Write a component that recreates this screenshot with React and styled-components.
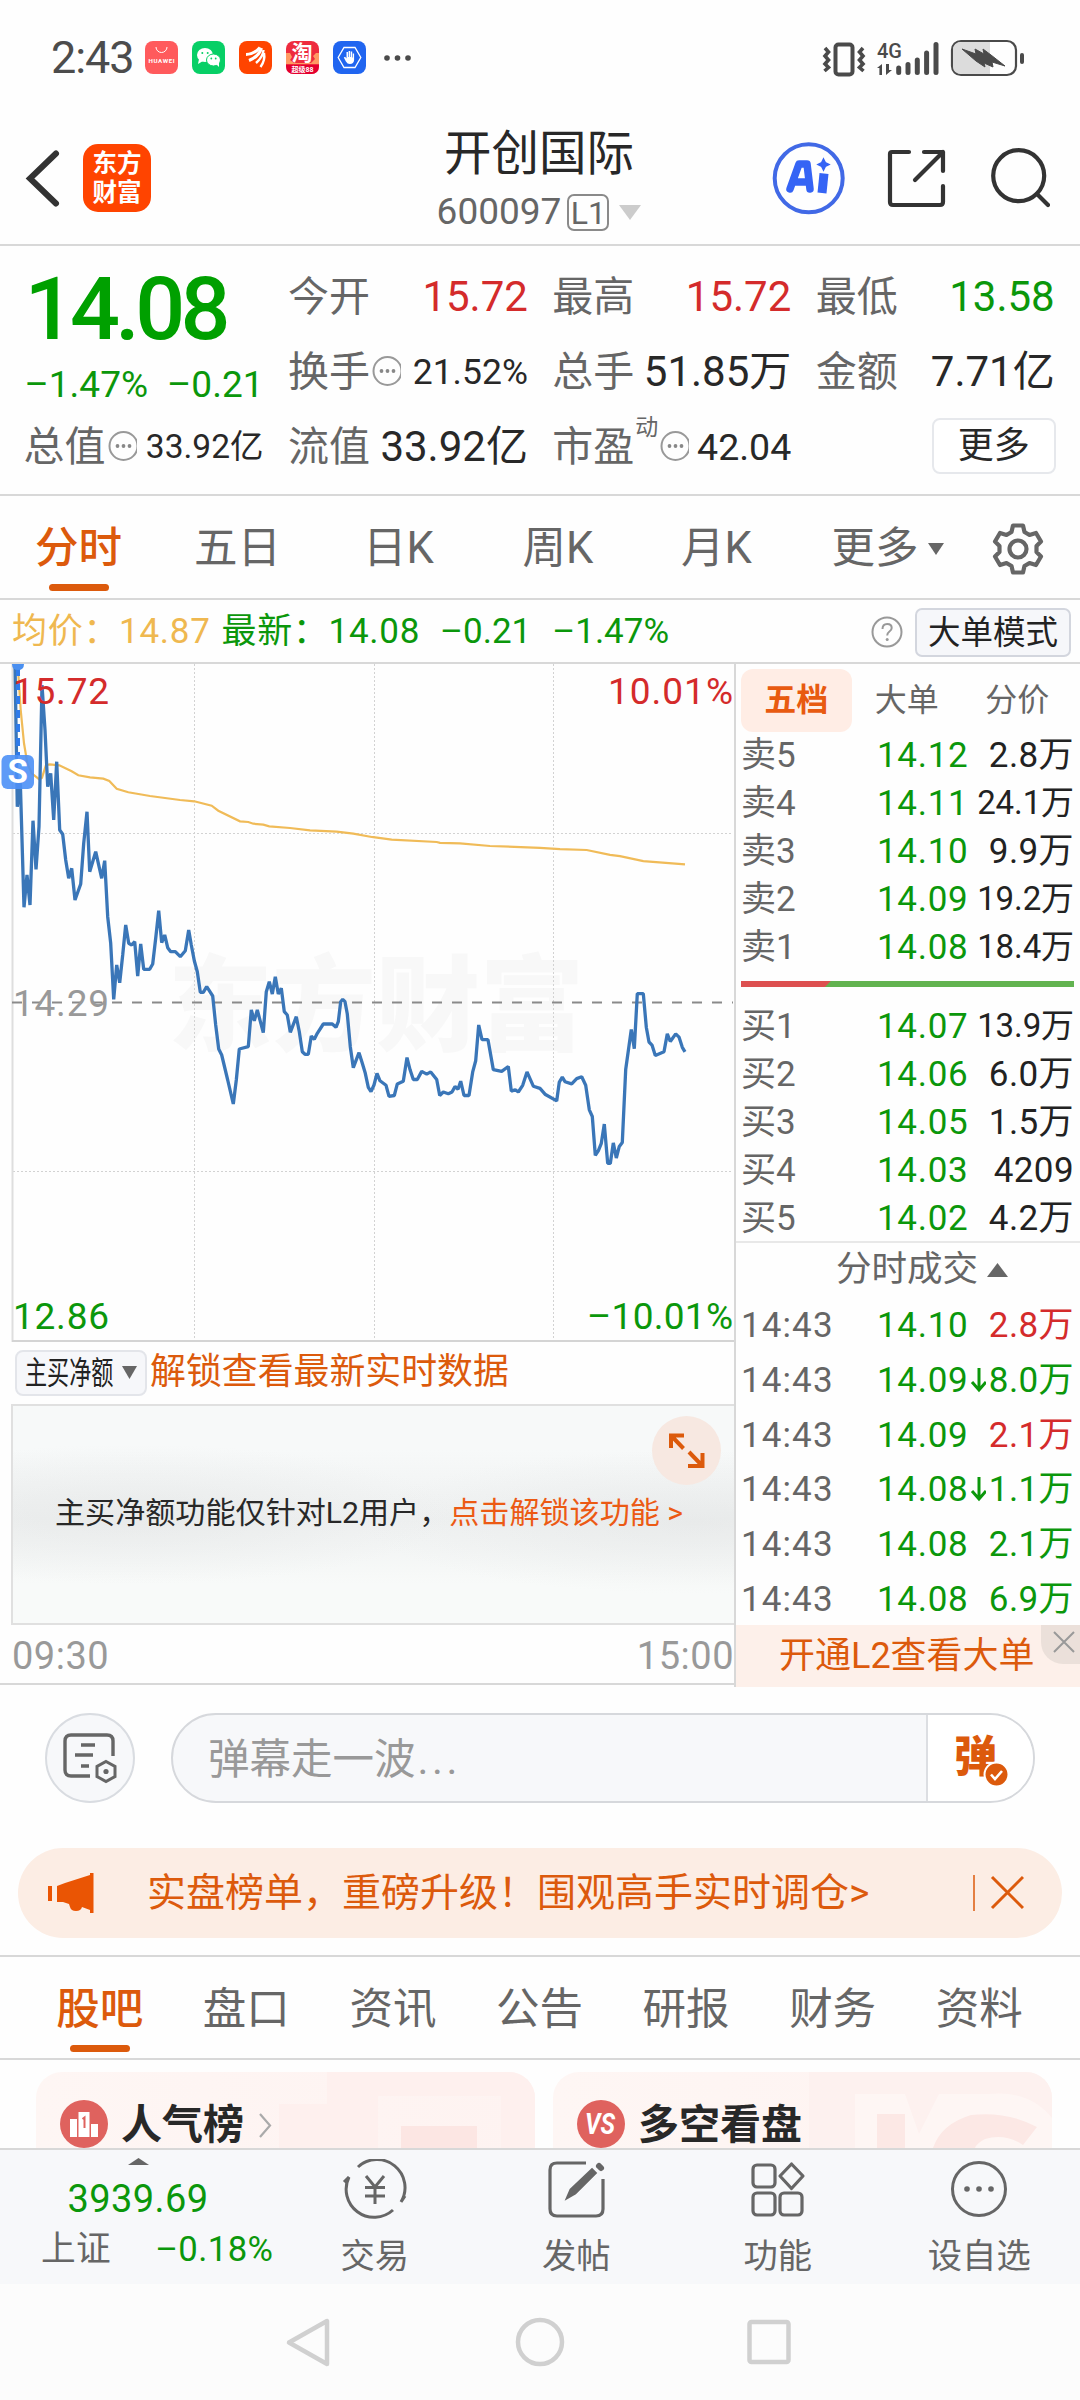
import React from 'react';
import styled, { createGlobalStyle, css } from 'styled-components';

const color = {
  green: '#0b970b',
  red: '#d42b2b',
  orange: '#dc5a0c',
  grey: '#666',
  dark: '#282828',
  line: '#d8d8d8',
};

const GlobalStyle = createGlobalStyle`
  * {
    box-sizing: border-box;
  }
  body {
    margin: 0;
    background: #fefefe;
    font-family: Roboto, "Noto Sans CJK SC", sans-serif;
    line-height: 1.1;
    color: ${color.dark};
  }
  svg {
    display: block;
    flex: none;
  }
`

const Screen = styled.div`
  width: 1080px;
  height: 2400px;
  overflow: hidden;
  display: flex;
  flex-direction: column;
  white-space: nowrap;
`

/* ---------- status bar ---------- */

const StatusBar = styled.div`
  height: 115px;
  padding: 0 56px 0 51px;
  display: flex;
  align-items: center;
  justify-content: space-between;
`
const StatusGroup = styled.div`
  display: flex;
  align-items: center;
  height: 40px;
`
const Clock = styled.span`
  width: 94px;
  font-size: 45px;
  line-height: 42px;
  letter-spacing: -1.1px;
  color: #4c4c4c;
`
const AppIcons = styled.div`
  display: flex;
  gap: 14px;
  margin-right: 17px;
`

const StatusIcons = () => (
  <AppIcons>
    <svg width="33" height="33" viewBox="0 0 33 33">
      <rect width="33" height="33" rx="8" fill="#ff5a5c" />
      <path d="M11 6a5.5 5.5 0 0 0 11 0" fill="none" stroke="#fff" strokeWidth="1" />
      <text x="16.5" y="21.5" fontSize="6.2" fontWeight="700" textAnchor="middle" textLength="26" fill="#fff">HUAWEI</text>
    </svg>
    <svg width="33" height="33" viewBox="0 0 33 33">
      <rect width="33" height="33" rx="8" fill="#07cf66" />
      <ellipse cx="13" cy="14" rx="8" ry="7" fill="#fff" />
      <path d="M7 18l-1 5 5-3z" fill="#fff" />
      <ellipse cx="21.5" cy="19" rx="7" ry="6" fill="#fff" stroke="#07cf66" strokeWidth="1" />
      <path d="M24 23l3 3 0-5z" fill="#fff" />
      <circle cx="10.3" cy="12" r="1" fill="#07cf66" />
      <circle cx="15.7" cy="12" r="1" fill="#07cf66" />
      <circle cx="19.3" cy="17.5" r="0.9" fill="#07cf66" />
      <circle cx="23.7" cy="17.5" r="0.9" fill="#07cf66" />
    </svg>
    <svg width="33" height="33" viewBox="0 0 33 33">
      <rect width="33" height="33" rx="8" fill="#ff4400" />
      <g fill="none" stroke="#fff" strokeWidth="3">
        <path d="M7 13.500q8 0 14-7" />
        <path d="M10 19.500q10-4 12.500-12.500" />
        <path d="M17 22q7-6 7.500-13" strokeWidth="2.400" />
        <path d="M21.500 26q5-7 3.500-14" strokeWidth="2.400" />
      </g>
    </svg>
    <svg width="33" height="33" viewBox="0 0 33 33">
      <rect width="33" height="33" rx="8" fill="#ee2b3e" />
      <path d="M0 12h4l2 4-2 3 4 3h17l4-4-2-3 3-3h3v11H0z" fill="#ff9a62" />
      <path d="M0 24h33v1q0 8-8 8H8q-8 0-8-8z" fill="#e4002e" />
      <text x="16" y="19" fontSize="21" fontWeight="700" textAnchor="middle" fill="#fff">淘</text>
      <text x="16.5" y="31" fontSize="7" fontWeight="700" textAnchor="middle" fill="#fff">超级88</text>
    </svg>
    <svg width="33" height="33" viewBox="0 0 33 33">
      <rect width="33" height="33" rx="8" fill="#2065f0" />
      <path d="M11 6.5h11l5.8 10L22 26.500H11l-5.800-10z" fill="none" stroke="#fff" strokeWidth="1.3" />
      <path d="M13.500 11h1.500v5h.6v-6h1.500v6h.6v-5.500h1.500v6h.6v-4h1.300v6.500q-.3 4-4.200 4-2.600 0-4-2.600l-2.100-4 1.300-.6 1.400 1.700z" fill="#fff" />
    </svg>
  </AppIcons>
)

const SystemIcons = () => (
  <svg width="204" height="40" viewBox="820 36 204 40">
    <g fill="none" stroke="#4a4a4a">
      <rect x="835.500" y="42.500" width="17" height="30" rx="3" strokeWidth="4" />
      <path d="M825 46l3.500 4-3.500 4 3.500 4-3.500 4 3.500 3.500-4 3.500M863 46l-3.500 4 3.500 4-3.500 4 3.500 4-3.500 3.500 4 3.500" strokeWidth="3.600" />
      <rect x="952" y="39" width="64" height="34" rx="9" strokeWidth="2.200" />
    </g>
    <path d="M990 40v32h-28q-9 0-9-8V48q0-8 9-8z" fill="#dcdcdc" />
    <path d="M962 47l14 5-1-5 9 5-1-5 8 6 14 11-13-4 1 5-9-4 1 4-9-6z" fill="#4a4a4a" stroke="#4a4a4a" strokeLinejoin="round" />
    <rect x="1020" y="51" width="4" height="11" rx="2" fill="#4a4a4a" />
    <text x="877" y="55.500" fontSize="21" fontWeight="500" textLength="25" lengthAdjust="spacingAndGlyphs" fill="#4a4a4a">4G</text>
    <path d="M877 66l5-4v11h-2.600v-7zM886 62v11l6-5h-3v-6z" fill="#4a4a4a" />
    <g stroke="#4a4a4a" strokeWidth="5" strokeLinecap="round">
      <path d="M898.700 66v4.500M908 62.500v8M917.300 58v12.500M926.600 51v19.500M936 42.500v28" />
    </g>
  </svg>
)

/* ---------- title bar ---------- */

const Header = styled.header`
  height: 131px;
  padding: 0 30px 0 24px;
  border-bottom: 2px solid ${color.line};
  display: grid;
  grid-template-columns: 59px 250px 1fr 308px;
  align-items: center;
`
const Logo = styled.div`
  width: 68px;
  height: 68px;
  margin-top: -4px;
  border-radius: 15px;
  background: #ff4400;
  color: #fff;
  font-size: 24.5px;
  font-weight: 700;
  line-height: 29px;
  padding: 5px 0 0 9.500px;
  white-space: normal;
`
const TitleBlock = styled.div`
  display: flex;
  flex-direction: column;
  align-items: center;
  margin: 3px 0 0 3px;
`
const StockName = styled.h1`
  margin: 0;
  font-size: 47.500px;
  font-weight: 400;
  line-height: 62px;
`
const StockCode = styled.div`
  display: flex;
  align-items: center;
  height: 54px;
  font-size: 37px;
  color: ${color.grey};
`
const Level = styled.span`
  width: 42px;
  height: 37px;
  margin: 1px 10px 0 6px;
  border: 2px solid #8a8a8a;
  border-radius: 7px;
  font-size: 32px;
  line-height: 34px;
  text-align: center;
`
const HeaderActions = styled.div`
  display: flex;
  align-items: center;
  justify-content: flex-end;
  margin-top: -4px;
`

/* ---------- quote summary ---------- */

const Quote = styled.section`
  height: 250px;
  border-bottom: 2px solid ${color.line};
  padding: 14px 25px 0 24.500px;
  display: grid;
  grid-template-columns: 239px 239px 238px 238px;
  grid-template-rows: 75px 75px 75px;
  column-gap: 25.400px;
`
const Price = styled.div`
  grid-row: span 2;
  color: #00a000;
  display: flex;
  flex-direction: column;
`
const LastPrice = styled.strong`
  font-size: 88px;
  font-weight: 500;
  line-height: 98px;
  letter-spacing: -4.600px;
`
const Change = styled.div`
  display: flex;
  justify-content: space-between;
  font-size: 37px;
  line-height: 54px;
  color: ${color.green};
`
const Cell = styled.div`
  display: flex;
  align-items: center;
  font-size: ${props => props.$small || 42}px;
  color: ${props => color[props.$tone] || color.dark};
  height: 75px;
`
const CellLabel = styled.span`
  font-size: 41px;
  margin: 1px 0 0 -1px;
  color: ${color.grey};
`
const CellValue = styled.span`
  margin-left: auto;
`
const Superscript = styled.sup`
  font-size: 23px;
  line-height: 24px;
  align-self: flex-start;
  margin: 6px 0 0 1px;
  color: ${color.grey};
`
const MoreButton = styled.button`
  justify-self: end;
  align-self: center;
  width: 124px;
  height: 56px;
  padding: 0;
  margin: -4px -1px 0 0;
  border: 2px solid #e6e8ec;
  border-radius: 8px;
  background: #fff;
  font: 36px/50px Roboto, "Noto Sans CJK SC", sans-serif;
  color: ${color.dark};
`

const Hint = () => (
  <svg width="31" height="34" viewBox="0 0 31 34">
    <circle cx="17.500" cy="15" r="14" fill="none" stroke="#999" strokeWidth="2" />
    <g fill="#888">
      <circle cx="11.500" cy="15" r="1.900" />
      <circle cx="17.500" cy="15" r="1.900" />
      <circle cx="23.500" cy="15" r="1.900" />
    </g>
  </svg>
)

/* ---------- tabs ---------- */

const PeriodTabs = styled.nav`
  height: 104px;
  border-bottom: 2px solid ${color.line};
  display: grid;
  grid-template-columns: 158px 160px 162px 157px 160px 182px 78px;
`
const SectionTabs = styled.nav`
  height: 105px;
  border: solid ${color.line};
  border-width: 2px 0;
  padding: 0 27px;
  display: grid;
  grid-template-columns: repeat(7, 1fr);
`
const Tab = styled.a`
  display: flex;
  align-items: center;
  justify-content: center;
  gap: 9px;
  height: 105px;
  padding-right: 1px;
  font-size: 43.500px;
  color: ${color.grey};
  ${props => props.$active && css`
    color: ${color.orange};
    font-weight: 500;
    flex-direction: column;
    justify-content: flex-start;
    gap: 0;
    line-height: 88px;
    padding-top: 9px;
    &::after {
      content: "";
      flex: none;
      width: 60px;
      height: 7px;
      margin-top: -9px;
      border-radius: 4px;
      background: ${color.orange};
    }
  `}
`

/* ---------- chart area ---------- */

const InfoRow = styled.div`
  height: 62px;
  padding: 2px 9px 0 12px;
  display: flex;
  align-items: center;
  font-size: 35px;
  color: ${color.green};
`
const Info = styled.span`
  margin-right: ${props => props.$gap || 0}px;
  letter-spacing: ${props => props.$tracking || 0}px;
  color: ${props => props.$color || 'inherit'};
`
const HelpIcon = styled.svg`
  margin-left: auto;
`
const ModeButton = styled.button`
  width: 156px;
  height: 49px;
  padding: 0;
  margin-left: 12px;
  border: 2px solid #d3d6de;
  border-radius: 7px;
  background: #f6f7fa;
  font: 32.500px/46px Roboto, "Noto Sans CJK SC", sans-serif;
  color: #222;
`
const Market = styled.main`
  height: 1023px;
  border-top: 2px solid ${color.line};
  border-bottom: 2px solid ${color.line};
  display: grid;
  grid-template-columns: 734px 346px;
`
const ChartColumn = styled.div`
  display: flex;
  flex-direction: column;
`
const Unlock = styled.div`
  height: 62px;
  padding: 0 0 0 15px;
  display: flex;
  align-items: center;
  font-size: 35.900px;
  color: ${color.orange};
`
const Picker = styled.div`
  width: 132px;
  height: 46px;
  margin: -1px 3px 0 0;
  padding: 0 8px 0 8px;
  border: 2px solid #e3e5ea;
  border-radius: 8px;
  background: #f6f7fa;
  display: flex;
  align-items: center;
  justify-content: space-between;
`
const PickerText = styled.span`
  width: 88px;
  font-size: 32px;
  line-height: 42px;
  color: #222;
  transform: scaleX(0.69);
  transform-origin: left;
`
const LockedPanel = styled.div`
  height: 221px;
  margin-left: 11px;
  border: solid #e0e0e0;
  border-width: 2px 0 2px 2px;
  padding: 10px 13px;
  display: flex;
  flex-direction: column;
  background:
    radial-gradient(ellipse 320px 70px at 120px 108px, rgba(222, 224, 224, 0.4), transparent),
    radial-gradient(ellipse 330px 72px at 680px 116px, rgba(222, 224, 224, 0.4), transparent),
    linear-gradient(#f7f9f9 20%, #eff1f1 52%, #f8faf9 82%);
`
const ExpandButton = styled.div`
  align-self: flex-end;
  width: 69px;
  height: 69px;
  border-radius: 50%;
  background: #f7e8e1;
`
const LockedText = styled.p`
  margin: 7px 0 0 29px;
  font-size: 30.100px;
  line-height: 42px;
  em {
    font-style: normal;
    color: #ec5a14;
  }
`
const TimeAxis = styled.div`
  flex: 1;
  padding: 2px 0 0 12px;
  display: flex;
  align-items: center;
  justify-content: space-between;
  font-size: 38px;
  letter-spacing: 0.500px;
  color: #999;
`

// [x, y] samples of the two half sessions, each on its own pixel grid
const morning = [
  [45, 38], [52, 470], [61, 395], [72, 772], [81, 675], [90, 765], [99, 512], [108, 658], [117, 530], [126, 105],
  [135, 240], [143, 410], [152, 370], [161, 510], [170, 335], [179, 540], [188, 553], [197, 630], [206, 685],
  [215, 655], [225, 750], [242, 702], [251, 580], [261, 485], [269, 665], [287, 605], [305, 685], [314, 632],
  [323, 800], [332, 880], [341, 1048], [350, 945], [359, 998], [368, 915], [377, 825], [386, 880], [395, 885],
  [404, 875], [413, 978], [422, 882], [431, 958], [449, 958], [458, 942], [467, 865], [476, 782], [485, 878],
  [494, 855], [503, 893], [512, 905], [526, 905], [541, 920], [556, 902], [566, 840], [574, 885], [583, 932],
  [592, 965], [601, 1027], [610, 1027], [620, 1010], [628, 1022], [638, 1038], [647, 1125], [656, 1197],
  [665, 1215], [683, 1290], [700, 1362], [709, 1290], [718, 1197], [745, 1190], [754, 1080], [763, 1112],
  [772, 1080], [790, 1148], [799, 1025], [808, 995], [817, 1032], [826, 980], [835, 1032], [844, 1015],
  [853, 1085], [862, 1095], [871, 1147], [889, 1100], [898, 1145], [907, 1205], [915, 1213], [925, 1213],
  [934, 1158], [943, 1168], [952, 1150], [970, 1122], [997, 1122], [1008, 1132], [1015, 1115], [1022, 1055],
  [1028, 1048], [1035, 1055], [1042, 1092], [1051, 1190], [1060, 1253], [1077, 1208], [1087, 1240],
  [1096, 1270], [1105, 1312], [1113, 1325], [1122, 1305], [1131, 1270],
]
const afternoon = [
  [18, 950], [22, 968], [30, 990], [38, 985], [51, 950], [60, 965], [78, 975], [87, 1000], [103, 998], [112, 972],
  [130, 966], [141, 913], [150, 940], [160, 962], [172, 962], [185, 944], [200, 950], [212, 945], [230, 962],
  [239, 998], [250, 990], [265, 994], [276, 990], [285, 978], [294, 984], [302, 966], [312, 998], [327, 998],
  [338, 945], [347, 920], [356, 840], [366, 873], [384, 873], [400, 940], [425, 944], [445, 933], [454, 988],
  [466, 985], [475, 990], [488, 975], [501, 945], [520, 977], [540, 982], [555, 995], [590, 1010], [598, 968],
  [607, 957], [615, 967], [635, 972], [650, 960], [665, 956], [677, 975], [688, 1030], [697, 1045], [706, 1132],
  [715, 1122], [724, 1105], [733, 1062], [743, 1150], [751, 1150], [760, 1104], [769, 1138], [778, 1112],
  [787, 1103], [797, 940], [814, 850], [823, 893], [832, 770], [850, 770], [859, 845], [867, 878], [876, 885],
  [886, 908], [912, 900], [922, 860], [931, 877], [947, 860], [957, 867], [967, 890], [975, 900],
]
const averageMorning = [
  [55, 70], [62, 180], [72, 280], [82, 340], [95, 370], [118, 388], [126, 383], [138, 345], [150, 343], [178, 346],
  [215, 364], [235, 376], [270, 382], [310, 386], [328, 393], [350, 416], [385, 427], [450, 438], [540, 450],
  [583, 454], [635, 467], [655, 482], [720, 514], [745, 516], [760, 521], [790, 524], [808, 529], [870, 534],
  [930, 541], [1010, 545], [1060, 551], [1115, 561],
]
const averageAfternoon = [
  [12, 415], [40, 419], [95, 425], [230, 430], [240, 432], [300, 433], [390, 439], [540, 443], [600, 446],
  [680, 448], [750, 459], [780, 462], [850, 473], [975, 480],
]

const plot = (first, second) => [
  ...first.map(([x, y]) => [x / 3, y / 3 - 14]),
  // skip afternoon samples that the morning line already covers
  ...second.map(([x, y]) => [360 + x / 3, y / 2.24 - 14]).filter(([x]) => x > first[first.length - 1][0] / 3),
].map(p => p.map(n => n.toFixed(1)).join(',')).join(' ')

const PriceChart = () => (
  <svg width="734" height="678" viewBox="0 0 734 678">
    <text x="168" y="379" fontSize="104" fontWeight="900" fill="#f8f8f8">东方财富</text>
    <g stroke="#d2d2d2" strokeWidth="1" strokeDasharray="2 2">
      <path d="M194.500 0V677M374.500 0V677M553.500 0V677M13 169.500H733M13 507.500H733" />
    </g>
    <path d="M12.500 0v678" stroke="#dedede" strokeWidth="2" />
    <path d="M12 677H734" stroke="#d4d4d4" strokeWidth="2" />
    <path d="M12 338.500H733" stroke="#8a8a8a" strokeWidth="2" strokeDasharray="10 10" />
    <polyline points={plot(averageMorning, averageAfternoon)} fill="none" stroke="#f0bb58" strokeWidth="2.200" />
    <polyline points={plot(morning, afternoon)} fill="none" stroke="#3a76b8" strokeWidth="3.300" strokeLinejoin="bevel" />
    <path d="M18 4V92" stroke="#2f7bea" strokeWidth="4" strokeDasharray="8 6" />
    <path d="M12 0h12q0 6-6 6t-6-6" fill="#4a8ff0" />
    <rect x="1.500" y="91" width="32.500" height="34" rx="6" fill="#4c90f6" fillOpacity="0.9" />
    <text x="17.700" y="119" fontSize="33" fontWeight="700" textAnchor="middle" fill="#fff">S</text>
    <g fontSize="37">
      <text x="13" y="40" textLength="96" fill={color.red}>15.72</text>
      <text x="733" y="40" textAnchor="end" textLength="125" fill={color.red}>10.01%</text>
      <text x="13" y="352" textLength="96" fill="#999">14.29</text>
      <text x="13" y="664.500" textLength="96" fill={color.green}>12.86</text>
      <text x="733" y="664.500" textAnchor="end" textLength="146" fill={color.green}>–10.01%</text>
    </g>
  </svg>
)

/* ---------- order book ---------- */

const Book = styled.aside`
  border-left: 2px solid ${color.line};
  display: flex;
  flex-direction: column;
`
const BookTabs = styled.div`
  height: 66px;
  padding: 5px 7px 1px 5px;
  display: grid;
  grid-template-columns: repeat(3, 110.500px);
`
const BookTab = styled.span`
  font-size: 32px;
  line-height: 63px;
  text-align: center;
  border-radius: 12px;
  color: ${color.grey};
  ${props => props.$active && css`
    color: #e85a10;
    font-weight: 700;
    background: #ffede5;
  `}
`
const Row = styled.div`
  height: ${props => props.$height}px;
  padding: 3px 6px 0 5px;
  display: grid;
  grid-template-columns: 136px 96px 1fr;
  align-items: center;
  font-size: 35px;
  line-height: 45px;
  color: ${color.grey};
`
const RowTime = styled.span`
  letter-spacing: 1.100px;
`
const RowPrice = styled.span`
  color: ${color.green};
  letter-spacing: 0.7px;
  display: flex;
  align-items: center;
`
const RowVolume = styled.span`
  justify-self: end;
  letter-spacing: 0.4px;
  color: ${props => color[props.$tone] || '#222'};
  ${props => props.$long && css`
    font-size: 33px;
    margin-top: -3px;
    letter-spacing: -0.1px;
  `}
`
const Balance = styled.div`
  height: 6px;
  margin: 11px 6px 14px 5px;
  background: linear-gradient(135deg, #dd5050 0 63px, #62b350 64px);
`
const TradesTitle = styled.div`
  height: 56px;
  border-top: 2px solid #e8e8e8;
  padding-left: 28px;
  display: flex;
  align-items: center;
  justify-content: center;
  gap: 9px;
  font-size: 35.500px;
  color: ${color.grey};
`
const LevelTwoBanner = styled.div`
  flex: 1;
  padding-left: 43px;
  display: flex;
  justify-content: space-between;
  background: #fdf0ea;
  font-size: 36px;
  line-height: 62px;
  color: ${color.orange};
`
const CloseCorner = styled.span`
  width: 39px;
  height: 39px;
  padding: 6px 0 0 12px;
  border-bottom-left-radius: 22px;
  background: #ebe0da;
`

const asks = [
  ['卖5', '14.12', '2.8万'],
  ['卖4', '14.11', '24.1万'],
  ['卖3', '14.10', '9.9万'],
  ['卖2', '14.09', '19.2万'],
  ['卖1', '14.08', '18.4万'],
]
const bids = [
  ['买1', '14.07', '13.9万'],
  ['买2', '14.06', '6.0万'],
  ['买3', '14.05', '1.5万'],
  ['买4', '14.03', '4209'],
  ['买5', '14.02', '4.2万'],
]
const trades = [
  { price: '14.10', volume: '2.8万', tone: 'red' },
  { price: '14.09', volume: '8.0万', tone: 'green', down: true },
  { price: '14.09', volume: '2.1万', tone: 'red' },
  { price: '14.08', volume: '1.1万', tone: 'green', down: true },
  { price: '14.08', volume: '2.1万', tone: 'green' },
  { price: '14.08', volume: '6.9万', tone: 'green' },
]

const BookLevels = ({ rows }) => (
  <div>
    {rows.map(([label, price, volume]) => (
      <Row key={label} $height={48}>
        <span>{label}</span>
        <RowPrice>{price}</RowPrice>
        <RowVolume $long={volume.length > 4}>{volume}</RowVolume>
      </Row>
    ))}
  </div>
)

const DownArrow = () => (
  <svg width="18" height="26" viewBox="0 0 18 26">
    <path d="M11 0v21M4 14l7 8 7-8" fill="none" stroke={color.green} strokeWidth="3" />
  </svg>
)

/* ---------- barrage input and notice ---------- */

const Barrage = styled.div`
  height: 163px;
  padding: 28px 45px 0;
  display: flex;
  gap: 36px;
`
const RoundButton = styled.div`
  width: 90px;
  height: 90px;
  border: 2px solid #d9dce1;
  border-radius: 50%;
  background: #f7f8fa;
  display: flex;
  align-items: center;
  justify-content: center;
`
const BarrageInput = styled.div`
  width: 864px;
  height: 90px;
  border: 2px solid #d6d8dc;
  border-radius: 45px;
  background: #f7f8fa;
  overflow: hidden;
  display: flex;
  justify-content: space-between;
  padding-left: 35px;
  font-size: 41.500px;
  line-height: 90px;
  color: #999;
`
const Dots = styled.span`
  letter-spacing: 3.500px;
  margin-left: 2px;
`
const BarrageSwitch = styled.span`
  width: 107px;
  border-left: 2px solid #dcdee2;
  background: #fff;
`
const Notice = styled.div`
  height: 90px;
  margin: 0 18px 17px;
  padding: 0 38px 0 30px;
  border-radius: 45px;
  background: #fcede4;
  display: flex;
  align-items: center;
  font-size: 39px;
  color: ${color.orange};
`
const NoticeText = styled.span`
  flex: 1;
  margin-left: 53px;
`

/* ---------- cards ---------- */

const Cards = styled.div`
  height: 88px;
  padding: 12px 28px 0 36px;
  display: grid;
  grid-template-columns: 499px 499px;
  gap: 18px;
`
const Card = styled.div`
  position: relative;
  height: 76px;
  padding: 0 24px;
  border-radius: 26px 26px 0 0;
  background: linear-gradient(90deg, #fef6f4, #fef3f1);
  display: flex;
  align-items: flex-end;
  font-size: 41px;
  font-weight: 700;
  line-height: 46px;
  color: #282828;
`
const CardArt = styled.svg`
  position: absolute;
  top: 0;
  right: 0;
  border-top-right-radius: 26px;
`
const CardIcon = styled.svg`
  margin-right: 13px;
`
const CardTitle = styled.span`
  margin-right: 14px;
  z-index: 1;
`

/* ---------- bottom bars ---------- */

const BottomBar = styled.footer`
  height: 136px;
  border-top: 2px solid ${color.line};
  background: #f7f8fa;
  display: grid;
  grid-template-columns: 274px repeat(4, 201.500px);
`
const IndexBlock = styled.div`
  display: flex;
  flex-direction: column;
  align-items: center;
  padding: 8px 0 0 2px;
  color: ${color.green};
  font-size: 38px;
  line-height: 69px;
  letter-spacing: 0.4px;
`
const IndexRow = styled.div`
  width: 100%;
  padding: 0 0 0 39px;
  display: flex;
  gap: 44px;
  font-size: 34.700px;
  line-height: 30px;
`
const IndexName = styled.span`
  color: ${color.grey};
`
const NavItem = styled.div`
  display: flex;
  flex-direction: column;
  align-items: center;
  padding-top: 9px;
  font-size: 34.300px;
  line-height: 75px;
  color: ${color.grey};
`
const SystemNav = styled.div`
  flex: 1;
  padding-top: 31px;
  background: #fcfcfc;
  display: flex;
  justify-content: center;
  gap: 180px;
`

const Triangle = ({ w, h, fill, up }) => (
  <svg width={w} height={h} viewBox="0 0 10 10" preserveAspectRatio="none">
    <path d={up ? 'M0 10h10L5 0z' : 'M0 0h10L5 10z'} fill={fill} />
  </svg>
)

const Cross = ({ size, stroke, width }) => (
  <svg width={size} height={size} viewBox={`0 0 ${size} ${size}`}>
    <path d={`M1 1L${size - 1} ${size - 1}M${size - 1} 1L1 ${size - 1}`} stroke={stroke} strokeWidth={width} />
  </svg>
)

const App = () => {
  return (
    <>
      <GlobalStyle />
      <Screen>
        <StatusBar>
          <StatusGroup>
            <Clock>2:43</Clock>
            <StatusIcons />
            <svg width="30" height="8" viewBox="0 0 30 8" fill="#4a4a4a">
              <circle cx="4" cy="4" r="2.800" />
              <circle cx="14.500" cy="4" r="2.800" />
              <circle cx="25" cy="4" r="2.800" />
            </svg>
          </StatusGroup>
          <SystemIcons />
        </StatusBar>

        <Header>
          <svg width="40" height="64" viewBox="0 0 40 64">
            <path d="M32 5.500L6 30.500l26 25" fill="none" stroke="#333" strokeWidth="6" strokeLinecap="round" />
          </svg>
          <Logo>东方<br />财富</Logo>
          <TitleBlock>
            <StockName>开创国际</StockName>
            <StockCode>
              600097
              <Level>L1</Level>
              <Triangle w={22} h={15} fill="#ccc" />
            </StockCode>
          </TitleBlock>
          <HeaderActions>
            <svg width="278" height="76" viewBox="772 140 278 76" fill="none" stroke="#333" strokeWidth="4.200" strokeLinecap="round">
              <circle cx="808.700" cy="178.300" r="34" stroke="#4169e6" strokeWidth="4" />
              <path d="M790 189l9-25h8l3 25M795 182h14" stroke="#3564f5" strokeWidth="7.500" strokeLinejoin="round" />
              <path d="M824 173.500l-2 19.500" stroke="#3564f5" strokeWidth="9" strokeLinecap="butt" />
              <path d="M823.500 159l1.800 3.700 3.700 1.800-3.700 1.800-1.800 3.700-1.800-3.700-3.700-1.800 3.700-1.800z" fill="#3564f5" stroke="#3564f5" strokeWidth="1.500" />
              <path d="M909 152h-17q-2 0-2 2v48q0 3 3 3h47q3 0 3-3v-16M924 152h19v19M943 152l-28 28" strokeLinejoin="round" />
              <circle cx="1018.700" cy="175.700" r="25.500" />
              <path d="M1037 194l11 11" />
            </svg>
          </HeaderActions>
        </Header>

        <Quote>
          <Price>
            <LastPrice>14.08</LastPrice>
            <Change><span>–1.47%</span><span>–0.21</span></Change>
          </Price>
          <Cell $tone="red"><CellLabel>今开</CellLabel><CellValue>15.72</CellValue></Cell>
          <Cell $tone="red"><CellLabel>最高</CellLabel><CellValue>15.72</CellValue></Cell>
          <Cell $tone="green"><CellLabel>最低</CellLabel><CellValue>13.58</CellValue></Cell>
          <Cell $small={35.5}><CellLabel>换手</CellLabel><Hint /><CellValue>21.52%</CellValue></Cell>
          <Cell><CellLabel>总手</CellLabel><CellValue>51.85万</CellValue></Cell>
          <Cell><CellLabel>金额</CellLabel><CellValue>7.71亿</CellValue></Cell>
          <Cell $small={33.5}><CellLabel>总值</CellLabel><Hint /><CellValue>33.92亿</CellValue></Cell>
          <Cell><CellLabel>流值</CellLabel><CellValue>33.92亿</CellValue></Cell>
          <Cell $small={37.5}><CellLabel>市盈</CellLabel><Superscript>动</Superscript><Hint /><CellValue>42.04</CellValue></Cell>
          <MoreButton>更多</MoreButton>
        </Quote>

        <PeriodTabs>
          <Tab $active>分时</Tab>
          <Tab>五日</Tab>
          <Tab>日K</Tab>
          <Tab>周K</Tab>
          <Tab>月K</Tab>
          <Tab>更多<Triangle w={16} h={12} fill={color.grey} /></Tab>
          <Tab>
            <svg width="54" height="54" viewBox="0 0 54 54" fill="none" stroke={color.grey} strokeWidth="4.200" strokeLinejoin="round">
              <path d="M22 3.500h10l1.500 6.500 5 3 6.500-2 5 8.500-4.500 4.500v6l4.500 4.500-5 8.500-6.500-2-5 3-1.500 6.500H22L20.500 44l-5-3-6.500 2-5-8.500L8.500 30v-6L4 19.500 9 11l6.500 2 5-3z" />
              <circle cx="27" cy="27" r="8.500" />
            </svg>
          </Tab>
        </PeriodTabs>

        <InfoRow>
          <Info $color="#efb850" $gap={11} $tracking={0.7}>均价：14.87</Info>
          <Info $gap={20} $tracking={0.7}>最新：14.08</Info>
          <Info $gap={21}>–0.21</Info>
          <Info>–1.47%</Info>
          <HelpIcon width="32" height="32" viewBox="0 0 32 32">
            <circle cx="16" cy="16" r="14.500" fill="none" stroke="#999" strokeWidth="2" />
            <path d="M11.500 13q0-5 4.700-5 4.500 0 4.500 4 0 2-2.500 3.800-2 1.500-2 3.700" fill="none" stroke="#999" strokeWidth="2" />
            <circle cx="16.200" cy="23.500" r="1.500" fill="#999" />
          </HelpIcon>
          <ModeButton>大单模式</ModeButton>
        </InfoRow>

        <Market>
          <ChartColumn>
            <PriceChart />
            <Unlock>
              <Picker>
                <PickerText>主买净额</PickerText>
                <Triangle w={15} h={13} fill={color.grey} />
              </Picker>
              解锁查看最新实时数据
            </Unlock>
            <LockedPanel>
              <ExpandButton>
                <svg width="69" height="69" viewBox="0 0 69 69" fill="none" stroke={color.orange} strokeWidth="4">
                  <path d="M19 32V19.500h13M19 19.500l12.500 13M36 50h14.500V37M50.500 50L37 36" />
                </svg>
              </ExpandButton>
              <LockedText>主买净额功能仅针对L2用户，<em>点击解锁该功能 &gt;</em></LockedText>
            </LockedPanel>
            <TimeAxis><span>09:30</span><span>15:00</span></TimeAxis>
          </ChartColumn>
          <Book>
            <BookTabs>
              <BookTab $active>五档</BookTab>
              <BookTab>大单</BookTab>
              <BookTab>分价</BookTab>
            </BookTabs>
            <BookLevels rows={asks} />
            <Balance />
            <BookLevels rows={bids} />
            <TradesTitle>分时成交<Triangle up w={21} h={14} fill={color.grey} /></TradesTitle>
            <div>
              {trades.map((trade, i) => (
                <Row key={i} $height={54.7}>
                  <RowTime>14:43</RowTime>
                  <RowPrice>{trade.price}{trade.down && <DownArrow />}</RowPrice>
                  <RowVolume $tone={trade.tone}>{trade.volume}</RowVolume>
                </Row>
              ))}
            </div>
            <LevelTwoBanner>
              开通L2查看大单
              <CloseCorner><Cross size={22} stroke="#999" width={2} /></CloseCorner>
            </LevelTwoBanner>
          </Book>
        </Market>

        <Barrage>
          <RoundButton>
            <svg width="56" height="52" viewBox="0 0 56 52" fill="none" stroke={color.grey} strokeWidth="3.400">
              <path d="M28 44H9q-6 0-6-6V9q0-6 6-6h36q6 0 6 6v15" />
              <path d="M19 13h14M13 23h18M19 34h8" />
              <path d="M44 29.500l9 5v10l-9 5-9-5v-10z" strokeWidth="3" />
              <circle cx="44" cy="39.500" r="2.600" fill={color.grey} stroke="none" />
            </svg>
          </RoundButton>
          <BarrageInput>
            <span>弹幕走一波<Dots>...</Dots></span>
            <BarrageSwitch>
              <svg width="105" height="86" viewBox="0 0 105 86">
                <text x="26" y="57" fontSize="43" fontWeight="900" fill={color.orange}>弹</text>
                <circle cx="68.500" cy="59.500" r="12" fill={color.orange} stroke="#fff" strokeWidth="2" />
                <path d="M63 59.500l4 4.500 7-8" fill="none" stroke="#fff" strokeWidth="2.600" />
              </svg>
            </BarrageSwitch>
          </BarrageInput>
        </Barrage>
        <Notice>
          <svg width="46" height="40" viewBox="0 0 46 40" fill="#ea5504">
            <path d="M0 13h4v15H0zM9 13l8-3L42 2V0h3.500v40H42v-3l-8-3q-1 4-6 4-5 0-6-4l-1-3-6-2H9z" />
          </svg>
          <NoticeText>实盘榜单，重磅升级！围观高手实时调仓&gt;</NoticeText>
          <svg width="51" height="38" viewBox="0 0 51 38" stroke={color.orange}>
            <path d="M1 1v36" strokeWidth="1.500" />
            <path d="M19 3l31 31M50 3L19 34" strokeWidth="3" />
          </svg>
        </Notice>

        <SectionTabs>
          <Tab $active>股吧</Tab>
          <Tab>盘口</Tab>
          <Tab>资讯</Tab>
          <Tab>公告</Tab>
          <Tab>研报</Tab>
          <Tab>财务</Tab>
          <Tab>资料</Tab>
        </SectionTabs>

        <Cards>
          <Card>
            <CardArt width="260" height="76" viewBox="0 0 260 76">
              <path d="M52 0h208v76H226V24H103v52H4V32h48z" fill="#fef0ee" />
              <path d="M126 54h76v22h-76z" fill="#fce6e3" />
            </CardArt>
            <CardIcon width="48" height="48" viewBox="0 0 48 48">
              <circle cx="24" cy="24" r="24" fill="#df625e" />
              <path d="M10 19h7v18h-7zM18.500 12h11v25h-11zM31 24h7v13h-7z" fill="#fff" />
              <path d="M22.500 19l2-1.500V28" fill="none" stroke="#df625e" strokeWidth="2" />
            </CardIcon>
            <CardTitle>人气榜</CardTitle>
            <svg width="16" height="46" viewBox="0 0 16 46">
              <path d="M2 12l10 11.500L2 35" fill="none" stroke="#aaa" strokeWidth="2.200" />
            </svg>
          </Card>
          <Card>
            <CardArt width="243" height="76" viewBox="0 0 243 76">
              <path d="M0 0h243v76H0z" fill="#fdf1ef" />
              <path d="M46 22h50l14 40 20-40h50q40-4 63 24v30H46z" fill="#fef6f4" />
              <path d="M68 42h28v34H68zM124 76q8-24 38-33 36-4 66 12l-14 18q-18-12-38-6-8 4-10 9z" fill="#fce8e5" />
            </CardArt>
            <CardIcon width="48" height="48" viewBox="0 0 48 48">
              <circle cx="24" cy="24" r="24" fill="#df625e" />
              <text x="23" y="34" fontSize="29" fontWeight="700" fontStyle="italic" textAnchor="middle" textLength="30" lengthAdjust="spacingAndGlyphs" fill="#fff">VS</text>
            </CardIcon>
            <CardTitle>多空看盘</CardTitle>
          </Card>
        </Cards>

        <BottomBar>
          <IndexBlock>
            <Triangle up w={21} h={7} fill={color.grey} />
            <span>3939.69</span>
            <IndexRow><IndexName>上证</IndexName>–0.18%</IndexRow>
          </IndexBlock>
          <NavItem>
            <svg width="66" height="60" viewBox="0 0 66 60" fill="none" stroke={color.grey} strokeWidth="3">
              <path d="M16 8a28 28 0 0 1 43 35l4-6M51 51A28 28 0 0 1 7 18l-5 5" />
              <path d="M24 17l9 11 9-11M23 28.500h20M23 37h20M33 28v17" />
            </svg>
            交易
          </NavItem>
          <NavItem>
            <svg width="60" height="60" viewBox="0 0 60 60" fill="none" stroke={color.grey} strokeWidth="3.200">
              <path d="M40 4H11q-7 0-7 7v39q0 7 7 7h39q7 0 7-7V20" />
              <path d="M22 38l3-7L46 11l3 3-20 20z" fill={color.grey} />
              <path d="M53 7l2 2" strokeWidth="6" strokeLinecap="round" />
            </svg>
            发帖
          </NavItem>
          <NavItem>
            <svg width="60" height="60" viewBox="0 0 60 60" fill="none" stroke={color.grey} strokeWidth="3.200" strokeLinejoin="round">
              <rect x="5" y="6" width="22" height="22" rx="4" />
              <rect x="5" y="34" width="22" height="22" rx="4" />
              <rect x="32" y="34" width="22" height="22" rx="4" />
              <path d="M43.500 5L55 17 43.500 29.500 32 17z" />
            </svg>
            功能
          </NavItem>
          <NavItem>
            <svg width="60" height="60" viewBox="0 0 60 60">
              <circle cx="30" cy="30" r="26.500" fill="none" stroke={color.grey} strokeWidth="3" />
              <g fill={color.grey}>
                <circle cx="18" cy="30" r="2.800" />
                <circle cx="30" cy="30" r="2.800" />
                <circle cx="42" cy="30" r="2.800" />
              </g>
            </svg>
            设自选
          </NavItem>
        </BottomBar>

        <SystemNav>
          <svg width="52" height="54" viewBox="0 0 52 54" fill="none" stroke="#d0d0d0" strokeWidth="4.500" strokeLinejoin="round">
            <path d="M45 6v43L7 27.500z" />
          </svg>
          <svg width="52" height="54" viewBox="0 0 52 54" fill="none" stroke="#d0d0d0" strokeWidth="4.500">
            <circle cx="26" cy="27" r="22" />
          </svg>
          <svg width="52" height="54" viewBox="0 0 52 54" fill="none" stroke="#d0d0d0" strokeWidth="4.500">
            <rect x="3.500" y="7" width="39" height="40" rx="2" />
          </svg>
        </SystemNav>
      </Screen>
    </>
  )
}

export default App;
